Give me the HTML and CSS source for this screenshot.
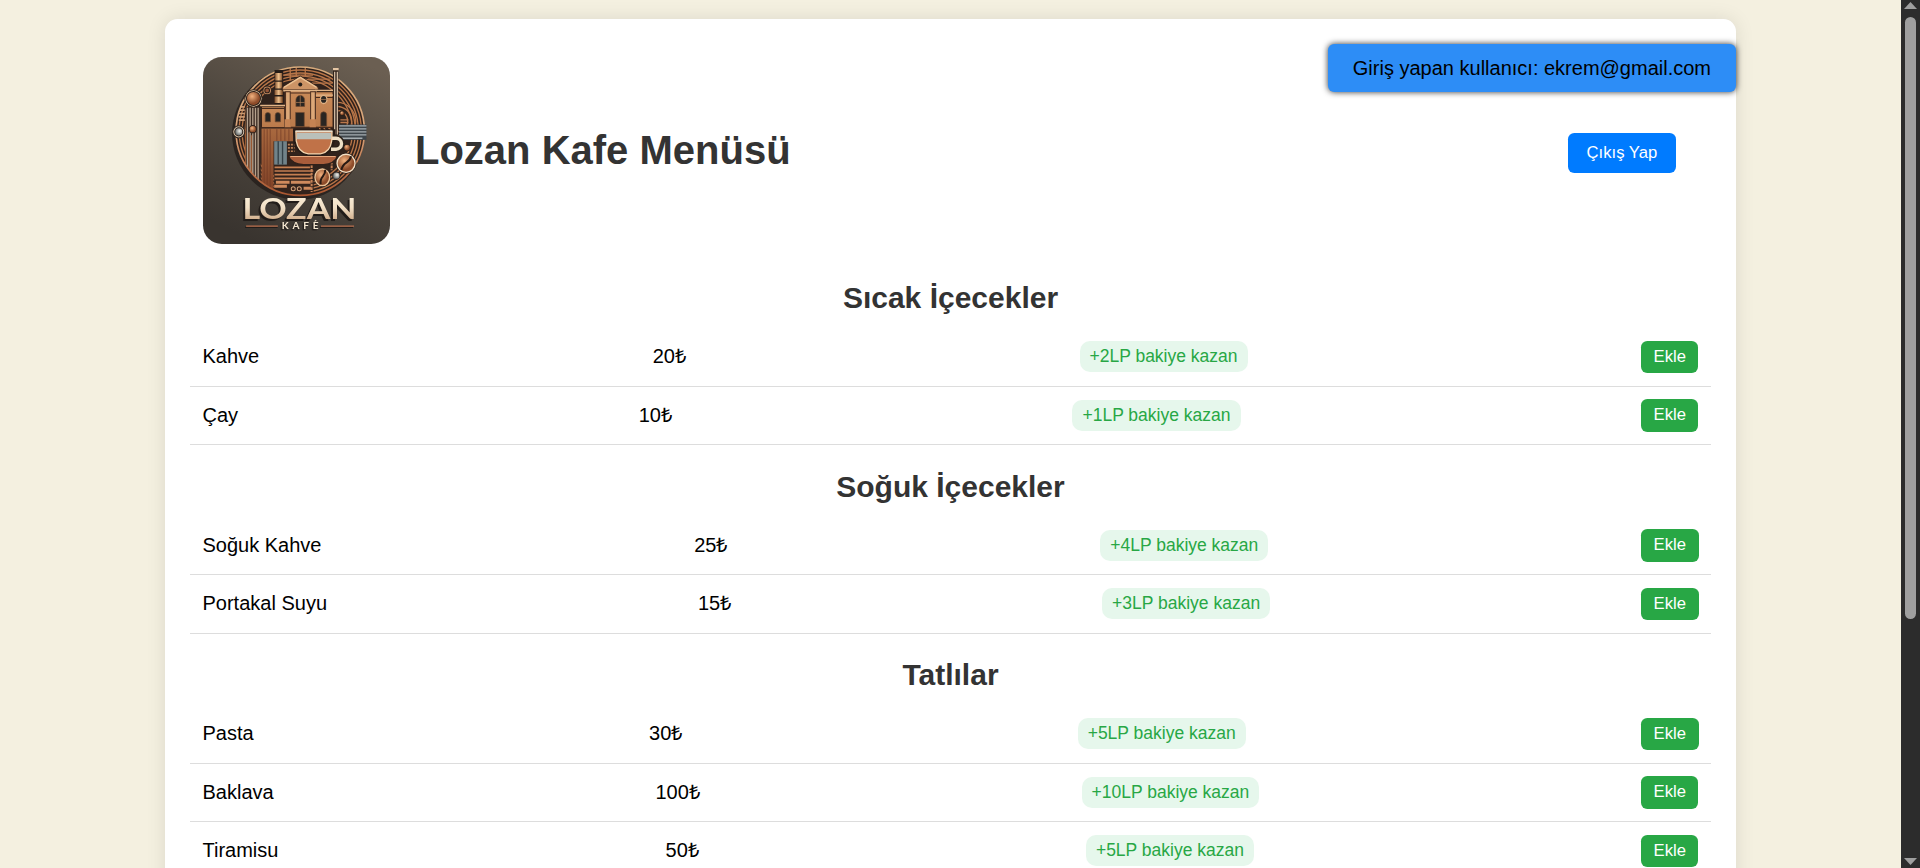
FILE: index.html
```html
<!DOCTYPE html>
<html lang="tr">
<head>
<meta charset="utf-8">
<title>Lozan Kafe Menüsü</title>
<link rel="stylesheet" href="styles.css">
</head>
<body>
<div class="page">
<main class="container">
  <div class="user-info">Giriş yapan kullanıcı: ekrem@gmail.com</div>
  <header class="header">
    <svg class="logo" viewBox="39 36 561 561" role="img" aria-label="Lozan Kafe">
      <defs>
        <linearGradient id="bg" x1="0.8" y1="0" x2="0.3" y2="1"><stop offset="0" stop-color="#6b5f52"/><stop offset=".5" stop-color="#4d463e"/><stop offset="1" stop-color="#39342f"/></linearGradient>
        <linearGradient id="wall" x1="0" y1="0" x2="0" y2="1"><stop offset="0" stop-color="#c98a58"/><stop offset="1" stop-color="#ba7a4b"/></linearGradient>
        <linearGradient id="ring" x1="0" y1="0" x2="0" y2="1"><stop offset="0" stop-color="#d8ab7c"/><stop offset=".5" stop-color="#d9a47a"/><stop offset="1" stop-color="#a9552f"/></linearGradient>
        <linearGradient id="wood" x1="0" y1="0" x2="0" y2="1"><stop offset="0" stop-color="#a9693f"/><stop offset="1" stop-color="#7d3f25"/></linearGradient>
        <linearGradient id="cream" x1="0" y1="0" x2="0" y2="1"><stop offset="0" stop-color="#fdf4e0"/><stop offset=".5" stop-color="#f1dfc5"/><stop offset="1" stop-color="#c49b76"/></linearGradient>
        <linearGradient id="chimney"><stop offset="0" stop-color="#80502f"/><stop offset=".5" stop-color="#efc08b"/><stop offset="1" stop-color="#70401f"/></linearGradient>
        <radialGradient id="ball" cx=".4" cy=".35"><stop offset="0" stop-color="#f2b27f"/><stop offset="1" stop-color="#8e4c2a"/></radialGradient>
        <radialGradient id="pearl" cx=".6" cy=".4"><stop offset="0" stop-color="#f3f1ea"/><stop offset="1" stop-color="#727777"/></radialGradient>
        <clipPath id="disc"><circle cx="330" cy="258" r="192"/></clipPath>
      </defs>
      <rect x="39" y="36" width="561" height="561" fill="url(#bg)"/>
      <circle cx="324" cy="265" r="198" fill="#211b18" opacity=".75"/>
      <circle cx="330" cy="258" r="193" fill="#30221c"/>
      <g clip-path="url(#disc)">
        <g fill="none" stroke="#b87548" stroke-width="4">
          <circle cx="330" cy="258" r="183"/><circle cx="330" cy="258" r="174"/><circle cx="330" cy="258" r="165"/><circle cx="330" cy="258" r="156"/>
          <circle cx="440" cy="228" r="56"/><circle cx="440" cy="228" r="44"/><circle cx="440" cy="228" r="32"/>
          <path d="M300 70v36M318 68v28M345 68v25M278 90h90M352 102h68M365 114h60"/>
        </g>
        <path d="M146 185h18M146 195h18M146 205h18M146 215h18M146 225h18" stroke="#c99a72" stroke-width="5"/>
        <path d="M166 186h46v260h-46z" fill="#3a2a22"/>
        <path d="M172 188V370M180 188V384M188 188V394M196 188V402M204 188V410" stroke="#b5a18d" stroke-width="4"/>
        <path d="M166 250V370M176 262V384M184 270V392" stroke="#9d5b34" stroke-width="3"/>
        <path d="M252 288h118v160H252z" fill="#33231c"/>
        <path d="M214 250h95v38h-59v160h-36z" fill="url(#wood)"/>
        <path d="M222 252V430M231 252V430M240 252V430M260 252v35M272 252v35M284 252v35M296 252v35" stroke="#6d3824" stroke-width="2"/>
        <rect x="252" y="288" width="38" height="70" fill="#71838a"/><path d="M264 288v70M277 288v70" stroke="#334047" stroke-width="4"/>
        <path d="M293 298h20M293 308h20M293 318h20" stroke="#bd8156" stroke-width="5" stroke-dasharray="6 3"/>
        <path d="M253 366h106M253 377h116M253 388h112M253 399h112" stroke="#c67f51" stroke-width="5"/>
        <path d="M257 411h41M302 411h59M252 423h38M340 429h22" stroke="#cf8a5d" stroke-width="9"/>
        <path d="M364 360v80M424 350v25" stroke="#c68257" stroke-width="6" stroke-dasharray="8 3"/>
        <circle cx="309" cy="430" r="6" fill="#40251b" stroke="#d7a47b" stroke-width="3"/><circle cx="327" cy="430" r="6" fill="#40251b" stroke="#d7a47b" stroke-width="3"/>
      </g>
      <circle cx="330" cy="258" r="192" fill="none" stroke="url(#ring)" stroke-width="5"/>
      <rect x="253" y="75" width="26" height="103" fill="#241b17"/>
      <path d="M255 84h21v22h-21zM255 110h21v20h-21zM253 134h25v16h-25zM253 154h25v20h-25z" fill="url(#chimney)"/>
      <g stroke="#3a241a" stroke-width="3">
        <path d="M214 185h70v62h-70z" fill="url(#wall)"/>
        <path d="M374 140h54v106h-54z" fill="url(#wall)"/>
        <path d="M284 135h90v111h-90z" fill="url(#wall)"/>
        <path d="M276 127l54-34 54 34v8H276z" fill="#cc9466"/>
      </g>
      <path d="M281 127l49-30 49 30" fill="none" stroke="#ecc294" stroke-width="4"/>
      <path d="M210 181h75M279 137h101M374 136h55M375 150h53" stroke="#e1b487" stroke-width="4"/>
      <path d="M214 190h70M284 144h90M374 157h54M214 247h217" stroke="#462b1e" stroke-width="3"/>
      <circle cx="330" cy="118" r="6" fill="#241d19"/>
      <g fill="#292522" stroke="#744b30" stroke-width="2">
        <path d="M317 184v-20a13 13 0 0 1 26 0v20zM225 230v-20a8 8 0 0 1 16 0v20zM255 230v-20a8 8 0 0 1 16 0v20zM391 243v-34a9 9 0 0 1 18 0v34zM316 202h26v42h-26z"/>
        <ellipse cx="400" cy="163" rx="10" ry="12" stroke="#e0b284" stroke-width="4"/>
      </g>
      <path d="M330 152v32M317 172h26M385 163h30" stroke="#b88258" stroke-width="2"/>
      <path d="M286 140h14v104h-14zM361 140h14v104h-14z" fill="#dca878" stroke="#4a2d1f" stroke-width="3"/>
      <path d="M283 222h19v24h-19zM358 222h19v24h-19z" fill="#c58353"/>
      <path d="M428 70h16v200h-16z" fill="#31231c"/><path d="M433 80v188M441 80v188" stroke="#ceb8a0" stroke-width="4"/><path d="M428 69h17v7h-17z" fill="#e6c7a5"/>
      <rect x="446" y="238" width="82" height="46" fill="#3e464c"/><path d="M446 242h82M446 251h82M446 260h82M446 269h82M446 279h70" stroke="#a5adb1" stroke-width="4"/>
      <g stroke="#2c211b" stroke-width="3">
        <circle cx="190" cy="160" r="26" fill="#e5c8a5"/><circle cx="190" cy="160" r="21" fill="url(#ball)"/>
        <circle cx="231" cy="136" r="13" fill="#c68b60"/><circle cx="231" cy="136" r="7" fill="#965638"/>
        <circle cx="146" cy="260" r="18" fill="#d4c0a7"/><circle cx="146" cy="260" r="12" fill="url(#pearl)"/>
        <circle cx="188" cy="252" r="11" fill="url(#ball)"/><circle cx="455" cy="204" r="7" fill="url(#ball)"/>
        <circle cx="470" cy="307" r="10" fill="url(#ball)"/><circle cx="438" cy="391" r="11" fill="url(#pearl)"/>
      </g>
      <path d="M450 224h24M450 232h24" stroke="#ba784c" stroke-width="4"/>
      <path d="M308 252h127l-2 38q-6 37-39 40h-43q-34-4-41-40z" fill="#271b16"/>
      <path d="M423 278h14a13 13 0 0 1 0 34h-16" fill="none" stroke="#2b211a" stroke-width="18"/>
      <path d="M425 279h12a13 13 0 0 1 0 33h-15" fill="none" stroke="#eedfc5" stroke-width="10"/>
      <path d="M317 259h108l-1 28q-5 35-34 39h-36q-30-4-36-39z" fill="#c07248" stroke="#f2d4ae" stroke-width="4"/>
      <path d="M320 263h102v19H320z" fill="#bac0ba"/><path d="M316 258h110" stroke="#e9e4d5" stroke-width="4"/>
      <path d="M294 332h148q-10 24-42 26h-60q-35-2-46-26z" fill="#a95d3b" stroke="#30201a" stroke-width="4"/><path d="M300 334h136" stroke="#e7a87e" stroke-width="3"/>
      <circle cx="467" cy="354" r="31" fill="#30221b"/><circle cx="467" cy="354" r="27" fill="url(#ball)" stroke="#f2dfc4" stroke-width="4"/>
      <path d="M482 333c-5 24-24 14-29 41" fill="none" stroke="#291a13" stroke-width="6"/>
      <ellipse cx="396" cy="396" rx="26" ry="28" fill="#30221b"/><ellipse cx="396" cy="396" rx="22" ry="25" fill="url(#ball)" stroke="#ebc398" stroke-width="4"/>
      <path d="M405 373c1 23-18 18-14 44" fill="none" stroke="#291a13" stroke-width="6"/>
      <text class="logo-name" x="157" y="520" textLength="341" lengthAdjust="spacingAndGlyphs" fill="url(#cream)">LOZAN</text>
      <text class="logo-sub" x="275" y="552" textLength="110" fill="#f4e6d0">KAFE</text>
      <path d="M373 528l5-4" stroke="#f4e6d0" stroke-width="3"/>
      <path d="M165 546h97M389 546h99" stroke="#211c19" stroke-width="4"/>
      <path d="M168 542h95M392 542h99" stroke="#b96f4d" stroke-width="4"/>
    </svg>
    <h1 class="title">Lozan Kafe Menüsü</h1>
    <button class="logout">Çıkış Yap</button>
  </header>

  <h2 class="category">Sıcak İçecekler</h2>
  <ul class="menu">
    <li class="item"><span>Kahve</span><span class="price">20₺</span><span class="reward">+2LP bakiye kazan</span><button class="add">Ekle</button></li>
    <li class="item"><span>Çay</span><span class="price">10₺</span><span class="reward">+1LP bakiye kazan</span><button class="add">Ekle</button></li>
  </ul>
  <h2 class="category">Soğuk İçecekler</h2>
  <ul class="menu">
    <li class="item"><span>Soğuk Kahve</span><span class="price">25₺</span><span class="reward">+4LP bakiye kazan</span><button class="add">Ekle</button></li>
    <li class="item"><span>Portakal Suyu</span><span class="price">15₺</span><span class="reward">+3LP bakiye kazan</span><button class="add">Ekle</button></li>
  </ul>
  <h2 class="category">Tatlılar</h2>
  <ul class="menu">
    <li class="item"><span>Pasta</span><span class="price">30₺</span><span class="reward">+5LP bakiye kazan</span><button class="add">Ekle</button></li>
    <li class="item"><span>Baklava</span><span class="price">100₺</span><span class="reward">+10LP bakiye kazan</span><button class="add">Ekle</button></li>
    <li class="item"><span>Tiramisu</span><span class="price">50₺</span><span class="reward">+5LP bakiye kazan</span><button class="add">Ekle</button></li>
  </ul>
</main>
</div>
<div class="scrollbar">
  <svg class="arrow" viewBox="0 0 13 7"><path d="M6.5 0L13 7H0z"/></svg>
  <div class="track"><div class="thumb"></div></div>
  <svg class="arrow" viewBox="0 0 13 7"><path d="M0 0h13L6.5 7z"/></svg>
</div>
</body>
</html>
```
FILE: styles.css
```css
* { box-sizing: border-box; }
body {
  margin: 0;
  height: 868px;
  display: flex;
  overflow: hidden;
  background: #f4f0e0;
  color: #000;
  font: 20px "Liberation Sans", Arial, sans-serif;
}
.page { flex: 1; height: 868px; overflow: hidden; padding: 19.25px 165px 0; }
.container {
  position: relative;
  height: 1180px;
  padding: 25px;
  background: #fff;
  border-radius: 12.5px;
  box-shadow: 0 0 18.75px rgba(0, 0, 0, 0.1);
}
.user-info {
  position: absolute;
  top: 25px;
  right: 0;
  height: 48px;
  padding: 0 25px;
  line-height: 48px;
  white-space: nowrap;
  background: #2d8df6;
  border-radius: 6.25px;
  box-shadow: 0 0 6.25px rgba(0, 0, 0, 0.8);
}
.header {
  display: flex;
  align-items: center;
  padding: 12.5px 35px 12.5px 12.5px;
}
.logo { width: 187.5px; height: 187.5px; border-radius: 18.75px; }
.logo-name { font: bold 86px Lato, "Liberation Sans", sans-serif; filter: drop-shadow(-6px 6px 1px #211c19); }
.logo-sub { font: bold 30px Lato, "Liberation Sans", sans-serif; filter: drop-shadow(-4px 4px 1px #211c19); }
.title { margin: 0 auto 1.5px 25px; font-size: 40px; line-height: 46px; color: #333; }
button { border: 0; color: #fff; font: 16.667px "Liberation Sans", Arial, sans-serif; border-radius: 6.25px; }
.logout { height: 40px; margin-top: 4px; padding: 0 18.75px; background: #007bff; }
.category {
  margin: 24.5px 0 13px;
  font-size: 30px;
  line-height: 34px;
  text-align: center;
  color: #333;
}
.menu { margin: 0; padding: 0; list-style: none; }
.item {
  display: flex;
  align-items: center;
  justify-content: space-between;
  height: 58.5px;
  padding: 0 12.5px 1px;
  border-bottom: 1px solid #ddd;
}
.price { height: 23px; line-height: 22px; }
.reward {
  height: 31px;
  padding: 0 10px;
  font-size: 17.5px;
  line-height: 30px;
  color: #28a745;
  background: #e6f7ec;
  border-radius: 10px;
}
.add { height: 32.5px; margin-top: 1px; padding: 0 12.5px 1px; background: #28a745; }
.scrollbar {
  width: 19px;
  height: 868px;
  display: flex;
  flex-direction: column;
  align-items: center;
  padding: 2px 0 3px;
  background: #2c2c2c;
}
.arrow { width: 13px; height: 7px; fill: #9f9f9f; }
.track { flex: 1; padding-top: 8px; }
.thumb { width: 11px; height: 602px; border-radius: 6px; background: #9f9f9f; }
```
